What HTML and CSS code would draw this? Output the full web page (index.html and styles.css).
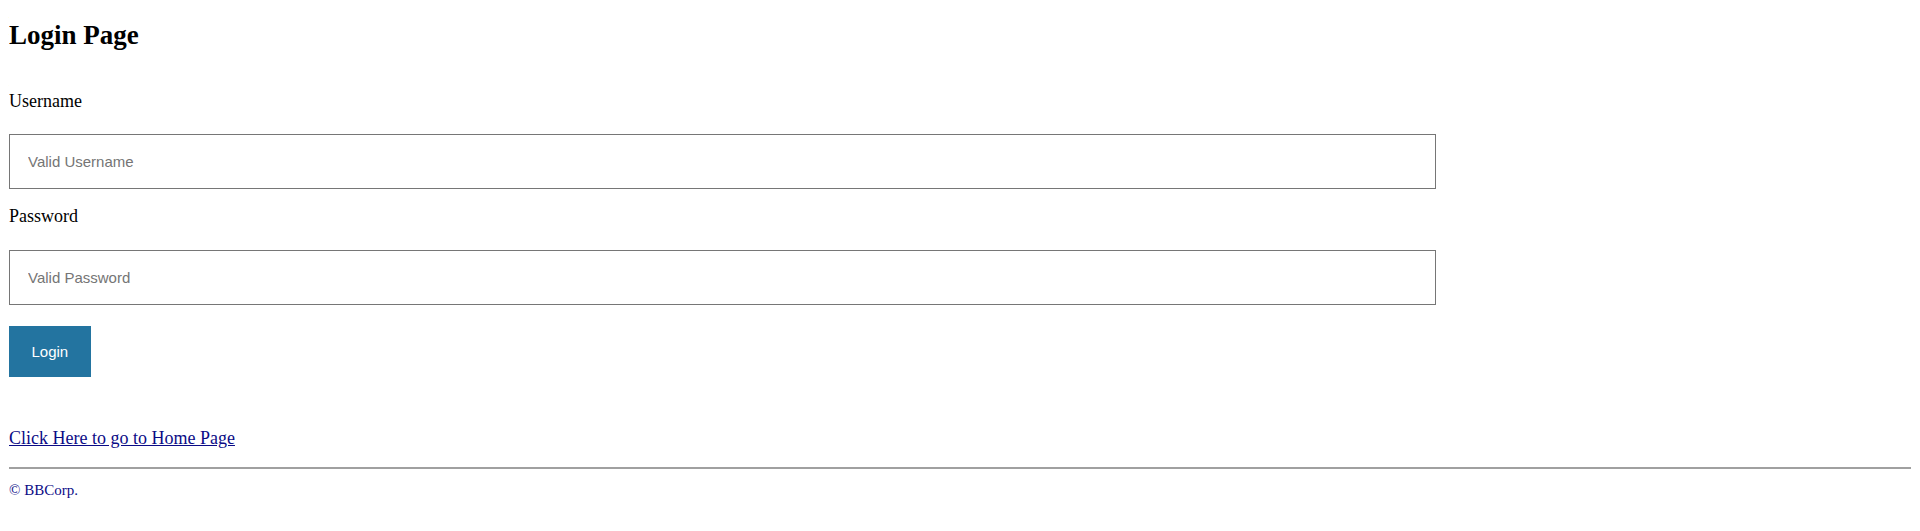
FILE: index.html
```html
<!DOCTYPE html>
<html lang="en">
<head>
<meta charset="utf-8">
<title>Login Page</title>
<link rel="stylesheet" href="styles.css">
</head>
<body>
<h2 class="title">Login Page</h2>
<form class="login-form">
  <label class="field-label" for="uname">Username</label>
  <input class="field-input" type="text" id="uname" placeholder="Valid Username">
  <label class="field-label field-label--second" for="pwd">Password</label>
  <input class="field-input field-input--second" type="password" id="pwd" placeholder="Valid Password">
  <button class="login-btn" type="button">Login</button>
</form>
<p class="home-link-row"><a class="home-link" href="#">Click Here to go to Home Page</a></p>
<hr class="divider">
<footer class="footer">© BBCorp.</footer>
</body>
</html>
```
FILE: styles.css
```css
html, body {
  background: #ffffff;
}
body {
  margin: 9px;
  font-family: "Liberation Serif", "Times New Roman", serif;
  font-size: 18px;
  color: #000000;
}
.title {
  font-size: 27px;
  font-weight: bold;
  margin: 11px 0 0;
  line-height: normal;
}
.login-form {
  display: flex;
  flex-direction: column;
  align-items: flex-start;
  margin-top: 40px;
}
.field-label {
  display: block;
  line-height: normal;
}
.field-label--second {
  margin-top: 17.5px;
}
.field-input {
  box-sizing: border-box;
  width: 75%;
  height: 55px;
  margin-top: 21.5px;
  padding: 0 18px;
  border: 1px solid #767676;
  border-radius: 0;
  font-family: "Liberation Sans", Arial, sans-serif;
  font-size: 15px;
  color: #000;
  background: #fff;
  outline: none;
}
.field-input--second {
  margin-top: 22.5px;
}
.field-input::placeholder {
  color: #757575;
}
.login-btn {
  margin-top: 21.5px;
  height: 51px;
  padding: 0 22.5px;
  border: none;
  border-radius: 0;
  background: #2374a0;
  color: #ffffff;
  font-family: "Liberation Sans", Arial, sans-serif;
  font-size: 15px;
  cursor: pointer;
}
.home-link-row {
  margin: 51px 0 0;
  line-height: normal;
}
.home-link {
  color: #0b0b86;
}
.divider {
  margin: 18px 0 0;
  border: none;
  border-top: 2px solid #a0a0a0;
  height: 0;
}
.footer {
  margin-top: 12.5px;
  font-size: 15px;
  color: #0b0b86;
  line-height: normal;
}
```
